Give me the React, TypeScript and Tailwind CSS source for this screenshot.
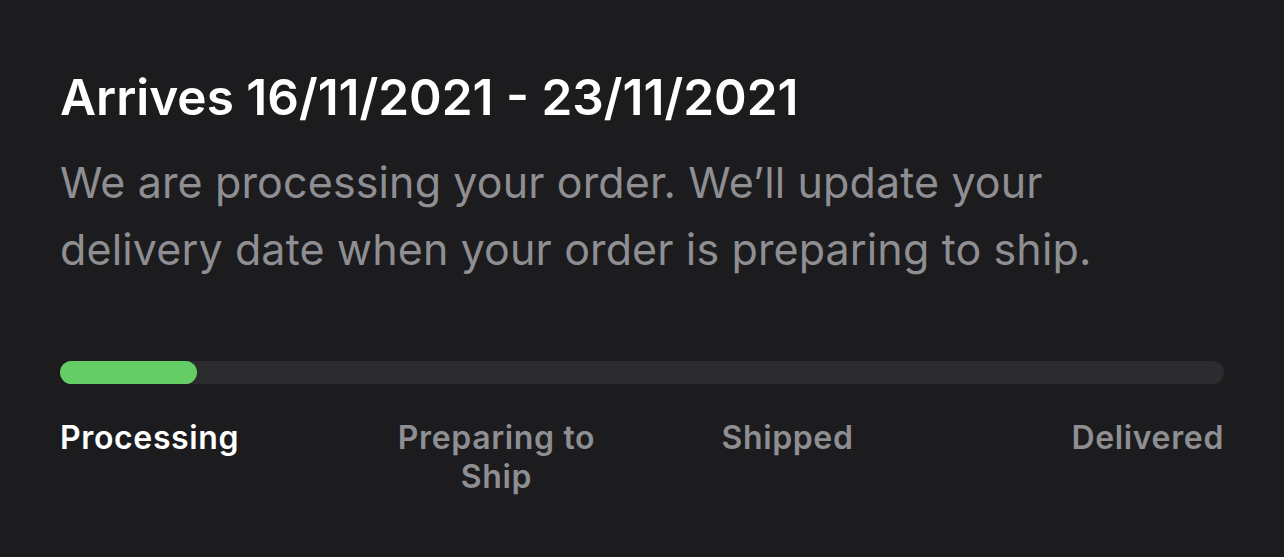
export default function App() {
  const steps = ["Processing", "Preparing to Ship", "Shipped", "Delivered"];
  return (
    <div className="min-h-screen w-full bg-[#1c1c1e] font-['Inter',sans-serif]">
      <div className="px-[60px] pt-[68px]">
        <h1 className="text-[49.5px] leading-[58px] font-semibold text-white">
          Arrives 16/11/2021 - 23/11/2021
        </h1>
        <p className="mt-[23px] text-[43px] leading-[67px] text-[#8e8e93] tracking-[0.003em]">
          We are processing your order. We’ll update your
          <br />
          delivery date when your order is preparing to ship.
        </p>

        {/* Progress Bar */}
        <div className="mt-[78px] h-[23px] w-full rounded-full bg-[#2c2c2e]">
          <div className="h-full w-[137px] rounded-full bg-[#65cd66]"></div>
        </div>

        <div className="mt-[34px] grid grid-cols-4 text-[32px] leading-[39px] font-semibold tracking-[0.02em]">
          <div className="text-left text-white">{steps[0]}</div>
          <div className="text-center text-[#8e8e93]">
            Preparing to
            <br />
            Ship
          </div>
          <div className="text-center text-[#8e8e93]">{steps[2]}</div>
          <div className="text-right text-[#8e8e93]">{steps[3]}</div>
        </div>
      </div>
    </div>
  );
}
